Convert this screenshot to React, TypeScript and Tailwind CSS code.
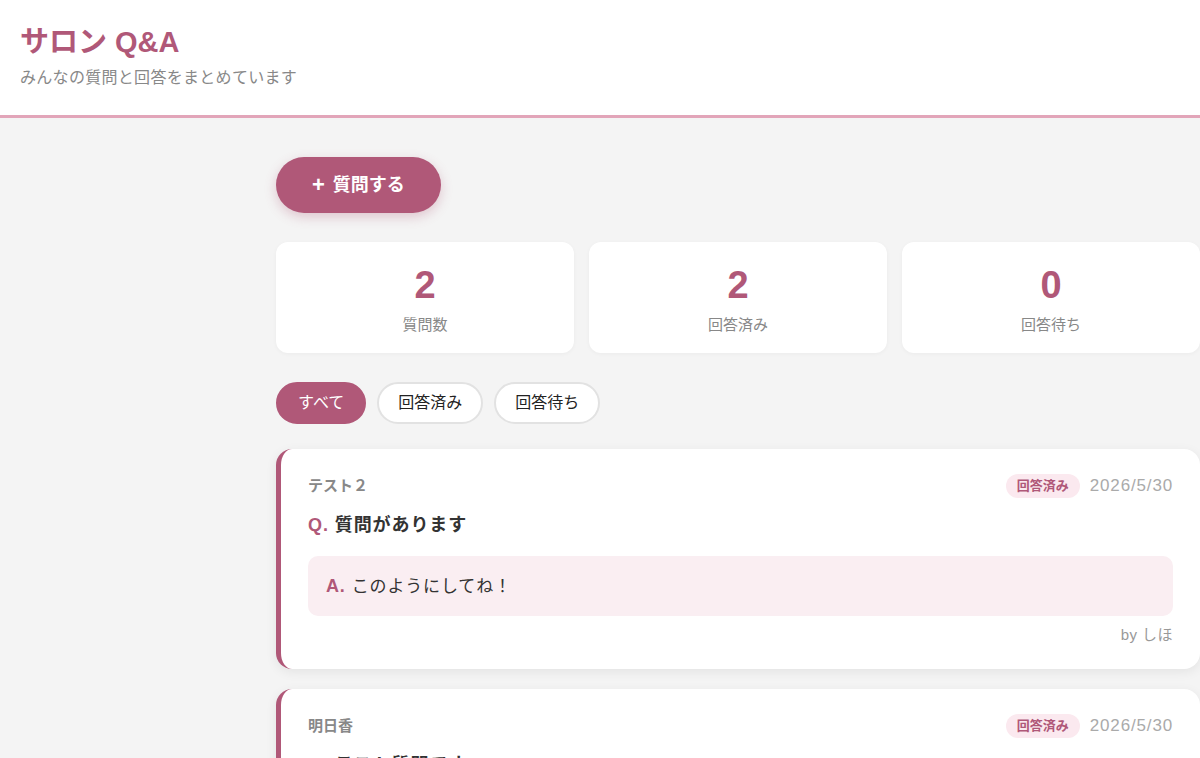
import { useState } from 'react';

const questions = [
  {
    author: 'テスト２',
    question: '質問があります',
    answer: 'このようにしてね！',
    answerer: 'しほ',
    date: '2026/5/30',
  },
  {
    author: '明日香',
    question: 'テスト質問です',
    answer: '了解です！',
    answerer: 'しほ',
    date: '2026/5/30',
  },
];

const filters = ['すべて', '回答済み', '回答待ち'];

const App = () => {
  const [filter, setFilter] = useState('すべて');

  return (
    <div className="min-h-screen bg-[#f4f4f4] font-['Liberation_Sans','Noto_Sans_CJK_JP',sans-serif] overflow-hidden">
      <header className="bg-white border-b-[3px] border-[#e2a5b9] px-5 pt-6 pb-[26px]">
        <h1 className="text-[29px] leading-9 font-bold text-[#b05878]">サロン Q&amp;A</h1>
        <p className="mt-[7px] text-base tracking-[0.3px] leading-[22px] text-[#888]">みんなの質問と回答をまとめています</p>
      </header>

      <main className="ml-[276px] w-[924px] pt-[39px]">
        <button className="h-14 px-9 rounded-full bg-[#b05878] text-white text-lg font-bold shadow-[0_4px_12px_rgba(176,88,120,0.3)] flex items-center gap-2">
          <span className="text-[22px] leading-none font-bold">+</span>
          質問する
        </button>

        <div className="mt-[29px] grid grid-cols-3 gap-[15px]">
          {[
            ['2', '質問数'],
            ['2', '回答済み'],
            ['0', '回答待ち'],
          ].map(([num, label]) => (
            <div key={label} className="bg-white rounded-xl pt-[21px] pb-[18px] text-center shadow-[0_1px_4px_rgba(0,0,0,0.04)]">
              <p className="text-[38px] leading-[44px] font-bold text-[#b05878]">{num}</p>
              <p className="mt-2 text-[15px] leading-5 text-[#888]">{label}</p>
            </div>
          ))}
        </div>

        <div className="mt-[29px] flex gap-[11px]">
          {filters.map((f) => (
            <button
              key={f}
              onClick={() => setFilter(f)}
              className={
                filter === f
                  ? 'h-[42px] px-5 rounded-full bg-[#b05878] text-white text-base border-2 border-[#b05878]'
                  : 'h-[42px] px-[19px] rounded-full bg-white text-[#222] text-base border-2 border-[#e2e2e2]'
              }
            >
              {f}
            </button>
          ))}
        </div>

        <div className="mt-[25px] flex flex-col gap-5">
          {questions.map((q, i) => (
            <div key={i} className="bg-white rounded-2xl border-l-[5px] border-[#b05878] pl-[27px] pr-[27px] pt-[25px] pb-6 shadow-[0_3px_12px_rgba(0,0,0,0.07)]">
              <div className="flex items-center justify-between h-6">
                <p className="text-[15px] font-bold text-[#888]">{q.author}</p>
                <div className="flex items-center gap-[10px]">
                  <span className="h-6 px-[11px] rounded-full bg-[#fbe9ef] text-[#b05878] text-[13px] font-bold flex items-center">回答済み</span>
                  <span className="text-[17px] tracking-[0.05em] text-[#aaa]">{q.date}</span>
                </div>
              </div>
              <p className="mt-[14px] text-lg tracking-[0.05em] leading-[27px] font-bold text-[#333]">
                <span className="text-[#b05878] mr-[6px]">Q.</span>
                {q.question}
              </p>
              <div className="mt-[17px] bg-[#faeef2] rounded-[10px] px-[18px] py-4 text-[17px] tracking-[0.05em] leading-[27px] text-[#333]">
                <span className="text-lg font-bold text-[#b05878] mr-[6px]">A.</span>
                {q.answer}
              </div>
              <p className="mt-[9px] text-right text-[15px] tracking-[0.03em] leading-5 text-[#999]">by {q.answerer}</p>
            </div>
          ))}
        </div>
      </main>
    </div>
  );
};

export default App;
